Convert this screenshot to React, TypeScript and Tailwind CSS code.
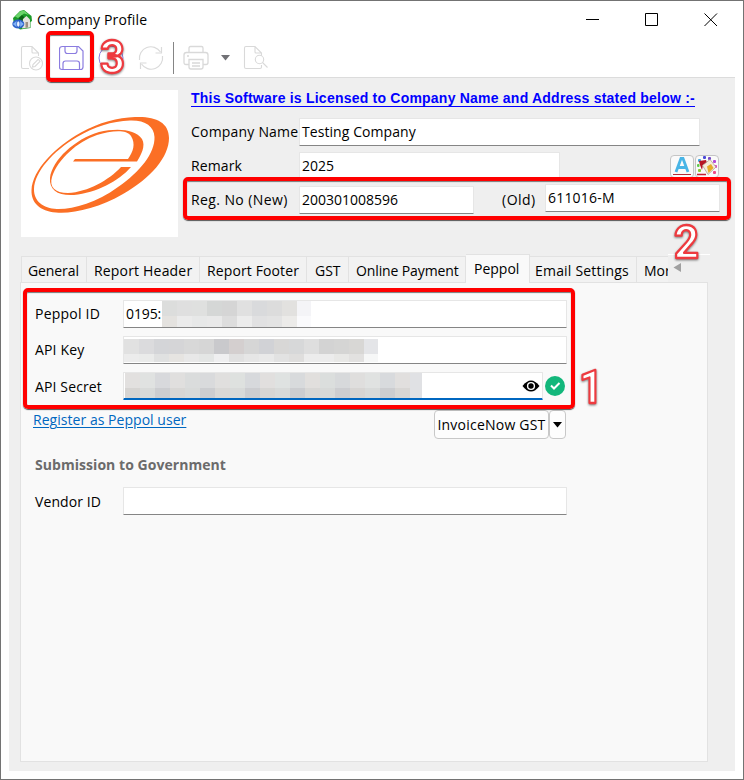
import React from "react";

const UI = "font-['Open_Sans','Noto_Sans',sans-serif]";

function AppIcon() {
  return (
    <svg width="20" height="20" viewBox="0 0 20 20">
      <path d="M1 8 L8 1 L12 0 L19.500 6 L20 11 L18.500 12 V18 L8 19.500 L2 14 Z" fill="#1c9a28" />
      <path d="M3 6.500 L8 1.500 L12 0.500 L17 5 L12 3.500 L6 8 Z" fill="#6bd46a" />
      <path d="M7 8 L10 5 L12 7 V11 H6 Z" fill="#0b6315" />
      <path d="M11 9 L14.500 6 L18 9.500 V17.500 L10 18.500 Z" fill="#e4e2dc" />
      <path d="M13.500 12 H16 V17.600 L13.500 18 Z" fill="#9a8f83" />
      <ellipse cx="6.300" cy="14" rx="6" ry="4.600" fill="#2c62c9" />
      <path d="M0.800 14 L4.500 11 V17 Z M11.800 14 L8.200 11 V17 Z" fill="#7fb0f5" />
      <ellipse cx="6.300" cy="14" rx="1.300" ry="2.800" fill="#e8f1ff" />
    </svg>
  );
}

function Logo() {
  return (
    <svg width="157" height="147" viewBox="0 0 157 147" fill="#fb6f25">
      <path
        fillRule="evenodd"
        d="M114 27 C134 26 148 32 148 48 C148 67 130 88 102 104 C78 118 52 124 35 122.500 C19 121 10 113 10.500 100 C11.500 80 34 57 60 42.500 C78 32.500 97 27.500 114 27 Z M109 30.500 C91 31 73 37 56 47 C32 61 13.500 82 13 99 C12.700 111 22 118.500 36 119 C52 119.500 75 113 97 97 C119 82 134 63 133.500 47 C133 36 124 30 109 30.500 Z"
      />
      <path
        fillRule="evenodd"
        d="M52 71.500 L54 69 H107 C112 62 115 54 110 46 C105 39 90 41 76 45 C56 52 37 69 31 87 C28 97 34 103 47 103 C67 102 88 90 100 77 H110 C98 91 75 103 53 105 C37 106 28 100 29 88 C31 70 54 49 78 42 C96 38 114 39 121 49 C125 56 120 65 116 71.500 Z"
      />
    </svg>
  );
}

function DocEdit() {
  return (
    <svg width="24" height="26" viewBox="0 0 24 26" fill="none" stroke="#d9d9d9" strokeWidth="1.1">
      <path d="M9 23.500 H3 Q1.500 23.500 1.500 22 V3 Q1.500 1.500 3 1.500 H12 L18.500 8 V11 M12 1.500 V7 Q12 8 13 8 H18.500" />
      <circle cx="16" cy="18.500" r="6.500" />
      <path d="M12.500 22 L13 19.500 L18 14.500 Q19 14.500 20 16.500 L15 21.500 Z" />
    </svg>
  );
}

function SaveIcon() {
  return (
    <svg width="25" height="26" viewBox="0.500 0 25 26" fill="none" stroke="#8b7ce0" strokeWidth="1.2">
      <path d="M4 1.500 H20 L24.500 6 V22 Q24.500 24.500 22 24.500 H3.500 Q1 24.500 1 22 V4 Q1 1.500 4 1.500 Z" />
      <path d="M6.500 1.500 V6 Q6.500 8.500 9 8.500 H16 Q18.500 8.500 18.500 6 V1.500" />
      <path d="M4.500 24.500 V18.500 Q4.500 16 7 16 H18.500 Q21 16 21 18.500 V24.500" />
    </svg>
  );
}

function RefreshIcon() {
  return (
    <svg width="26" height="26" viewBox="0 0 26 26" fill="none" stroke="#dadada" strokeWidth="1.2">
      <path d="M1.500 15 A11.500 11.500 0 0 1 22.500 7 M24.500 11 A11.500 11.500 0 0 1 3.500 19" />
      <path d="M23.500 2 V8 H17.500 M2.500 24 V18 H8.500" />
    </svg>
  );
}

function PrinterIcon() {
  return (
    <svg width="26" height="26" viewBox="0 0 26 26" fill="none" stroke="#d9d9d9" strokeWidth="1.3">
      <path d="M6 7.500 V3 Q6 1.500 7.500 1.500 H18.500 Q20 1.500 20 3 V7.500" />
      <path d="M6 19.500 H3 Q1 19.500 1 17.500 V10 Q1 7.500 3.500 7.500 H22.500 Q25 7.500 25 10 V17.500 Q25 19.500 23 19.500 H20" />
      <path d="M6 14.500 H20 V22 Q20 24 18 24 H8 Q6 24 6 22 Z M9 18 H17 M9 21 H17 M4 11 H6" />
    </svg>
  );
}

function DocSearch() {
  return (
    <svg width="26" height="26" viewBox="0 0 26 26" fill="none" stroke="#d9d9d9" strokeWidth="1.1">
      <path d="M18.500 20 V22 Q18.500 23.500 17 23.500 H3 Q1.500 23.500 1.500 22 V3 Q1.500 1.500 3 1.500 H12 L18.500 8 V11 M12 1.500 V7 Q12 8 13 8 H18.500" />
      <circle cx="16.500" cy="14.500" r="4.200" fill="#fff" />
      <path d="M19.500 17.500 L24.500 22.500" />
    </svg>
  );
}

function PaletteIcon() {
  return (
    <svg width="20" height="20" viewBox="0 0 20 20">
      <rect x="6" y="0" width="3" height="3" rx="1" fill="#4a4ad8" />
      <rect x="11" y="1" width="3" height="3" rx="1" fill="#7549c8" />
      <rect x="16" y="4" width="3" height="3" rx="1" fill="#b545d8" />
      <rect x="17" y="9" width="3" height="3" rx="1" fill="#e045c0" />
      <rect x="16" y="15" width="3" height="3" rx="1" fill="#ee4a85" />
      <rect x="1" y="3" width="3" height="3" rx="1" fill="#42a8df" />
      <rect x="0" y="8" width="2.500" height="3" rx="1" fill="#60c948" />
      <rect x="1" y="13" width="3" height="3" rx="1" fill="#8ac830" />
      <path d="M2 5 L9 4 L10 7 L6 9 L5 14 L3 9 Z" fill="#b61524" />
      <path d="M5.500 9.500 L13 3.500 L19 11 L11 18.500 Z" fill="#f5ecd9" stroke="#a69a8a" strokeWidth=".7" />
      <path d="M10 10.500 L14 8 L16.500 12 L11.500 17 Z" fill="#e6ac26" />
      <path d="M0 18.500 H9" stroke="#c41f32" strokeWidth="1.500" />
    </svg>
  );
}

function Field({ className, children }: { className: string; children?: React.ReactNode }) {
  return (
    <div
      className={`flex h-[28px] shrink-0 items-center border border-[#e6e6e6] border-b-[#858585] bg-white pl-[2px] rounded-[1px] ${className}`}
    >
      {children}
    </div>
  );
}

function Mosaic({ top, bottom, h1, h2, last }: { top: string[]; bottom: string[]; h1: string; h2: string; last: string }) {
  return (
    <div className="flex shrink-0 flex-col">
      {[top, bottom].map((row, r) => (
        <div key={r} className={`flex ${r === 0 ? h1 : h2}`}>
          {row.map((c, i) => (
            <div key={i} className={i === row.length - 1 ? last : "w-[15px]"} style={{ backgroundColor: c }} />
          ))}
        </div>
      ))}
    </div>
  );
}

function Tab({ label, className, text }: { label: string; className: string; text: string }) {
  return (
    <div className={`h-[26px] shrink-0 overflow-hidden border-r border-t border-[#e2e2e2] bg-[#f2f2f2] pt-[4px] whitespace-nowrap ${className}`}>
      <span className={text}>{label}</span>
    </div>
  );
}

function Frame({ className }: { className: string }) {
  return <div className={`absolute border-[4px] border-[#ff0000] rounded-[5px] shadow-[0_1px_1px_#555,inset_0_1px_1px_#777] ${className}`} />;
}

function Step({ n, className, width }: { n: string; className: string; width: number }) {
  return (
    <svg className={`absolute drop-shadow-[0_1px_1px_rgba(0,0,0,0.5)] ${className}`} width="40" height="64" viewBox="0 0 40 64">
      <text
        x="3"
        y="46"
        fontFamily="Roboto, sans-serif"
        fontWeight="700"
        fontSize="46"
        textLength={width}
        lengthAdjust="spacingAndGlyphs"
        fill="#fff"
        stroke="#ee3a3f"
        strokeWidth="2.300"
        strokeLinejoin="round"
      >
        {n}
      </text>
    </svg>
  );
}

const idTop = ["#dcdddc", "#dfdfdf", "#dfe0df", "#d5d7d6", "#d5d5d5", "#e0e0e0", "#d9dadc", "#dcdcdc", "#e2e1df", "#f4f4f7"];
const idBottom = ["#e4e2df", "#ebebeb", "#e7e8e8", "#e9e9e9", "#dddddd", "#ececec", "#e1e1e2", "#e3e3e3", "#ecebe9", "#fafafc"];
const keyTop = ["#e1e1e1", "#dbdbdd", "#d4d5d8", "#d5d5d7", "#d8d8d8", "#d6d6d6", "#c9c9cc", "#d4cfcf", "#d6d6d6", "#d1d2d6", "#d8d7d6", "#d7d8d9", "#dedede", "#d3d3d3", "#d5d5d4", "#d8d7d5", "#e4e5e8"];
const keyBottom = ["#ececec", "#eaebea", "#e0e1e1", "#e6e4e1", "#e8e8e8", "#e4e6e5", "#efeff0", "#e1e1e1", "#e6e6e6", "#e9e9e9", "#e2e2e2", "#dfdedd", "#ececec", "#ececec", "#e8e8e6", "#e2e1e0", "#f6f7f7"];
const secTop = ["#e2e0df", "#e0e2e1", "#d8d9dc", "#e0dfde", "#dadcdc", "#d9dadc", "#e0dfde", "#dee1df", "#d7d9dc", "#e1dfde", "#dfe2e1", "#d8dadc", "#e1dfdd", "#dbdedd", "#d7d9db", "#dfdedd", "#e0e2e1", "#d8dadd", "#e1dfde", "#e0e1e4"];
const secBottom = ["#d6d4d2", "#d8dad9", "#cccdd0", "#d8d7d5", "#d8dad9", "#cccdd0", "#d9d8d6", "#d8dad9", "#cccdd0", "#d7d6d4", "#d8dad9", "#cccdd0", "#d8d7d5", "#d7d9d8", "#cccdd0", "#d7d5d3", "#d8dad9", "#cccdd0", "#d8d6d4", "#e0e1e4"];

export default function App() {
  return (
    <div className={`relative flex h-[780px] w-[744px] flex-col overflow-hidden border border-[#737373] bg-white pr-[8px] pl-[8px] text-[14px] leading-[20px] text-black ${UI}`}>
      <header className="flex h-[38px] items-center pl-[3px]">
        <AppIcon />
        <span className="ml-[5px] tracking-[0.150px]">Company Profile</span>
        <svg className="mr-[16px] ml-auto" width="134" height="16" viewBox="0 0 134 16" fill="none" stroke="#000">
          <path d="M1 7.500 H14 M60.500 1.500 H72.500 V13.500 H60.500 Z" />
          <path d="M119.500 1.500 L132 14 M132 1.500 L119.500 14" />
        </svg>
      </header>
      <div className="flex h-[38px] shrink-0 items-center pl-[11px]">
        <DocEdit />
        <span className="ml-[15px]"><SaveIcon /></span>
        <svg className="ml-[14px]" width="26" height="26" viewBox="0 0 26 26" fill="none" stroke="#8b7ce0">
          <circle cx="13" cy="13" r="12" />
        </svg>
        <span className="ml-[14px]"><RefreshIcon /></span>
        <div className="ml-[9px] h-[32px] w-px bg-[#858585]" />
        <span className="ml-[9px]"><PrinterIcon /></span>
        <svg className="ml-[11px]" width="12" height="6" viewBox="0 0 12 6"><path d="M1 0 H10 L5.500 5.500 Z" fill="#717176" /></svg>
        <span className="ml-[11px]"><DocSearch /></span>
      </div>

      <main className="h-[694px] w-[726px] shrink-0 border-t border-[#dcdcdc] bg-[#efefef]">
        <section className="flex h-[176px] pt-[12px] pl-[12px]">
          <div className="h-[147px] w-[157px] shrink-0 bg-white"><Logo /></div>
          <div className="ml-[13px] w-[530px] shrink-0">
            <div className="h-[28px] pt-[1px] leading-[13px] whitespace-nowrap">
              <span className="border-b border-[#0000ff] font-['Liberation_Sans',sans-serif] text-[14px] font-bold tracking-[0.220px] text-[#0000ff]">This Software is Licensed to Company Name and Address stated below :-</span>
            </div>
            <div className="flex items-center">
              <span className="w-[108px] whitespace-nowrap tracking-[0.200px]">Company Name</span>
              <Field className="w-[401px]"><span className="tracking-[0.070px]">Testing Company</span></Field>
            </div>
            <div className="mt-[6px] flex items-center">
              <span className="w-[108px] tracking-[0.100px]">Remark</span>
              <Field className="w-[261px]">2025</Field>
              <div className="ml-[110px] flex gap-[1px]">
                <div className="flex h-[23px] w-[24px] items-center justify-center rounded-[4px] border border-[#c5c5c5] bg-[#fafafa]">
                  <svg width="20" height="20" viewBox="0 0 20 20">
                    <path d="M4 16 L9 2.500 H11 L16 16 M6 11.500 H14" fill="none" stroke="#49b5e6" strokeWidth="2.800" />
                    <path d="M1 18.500 H19" stroke="#b52b35" />
                  </svg>
                </div>
                <div className="flex h-[23px] w-[24px] items-center justify-center rounded-[4px] border border-[#c5c5c5] bg-[#fafafa]"><PaletteIcon /></div>
              </div>
            </div>
            <div className="mt-[6px] flex items-center">
              <span className="w-[108px] whitespace-nowrap tracking-[0.400px]">Reg. No (New)</span>
              <Field className="w-[175px]">200301008596</Field>
              <span className="ml-[28px] w-[43px] tracking-[0.500px]">(Old)</span>
              <Field className="mt-[-4px] w-[175px]"><span className="tracking-[0.200px]">611016-M</span></Field>
            </div>
          </div>
        </section>

        <div className="flex h-[28px] items-end pl-[12px]">
          <Tab label="General" className="w-[66px] border-l pl-[6px]" text="tracking-[-0.100px]" />
          <Tab label="Report Header" className="w-[113px] pl-[7px]" text="tracking-[0.180px]" />
          <Tab label="Report Footer" className="w-[107px] pl-[7px]" text="tracking-[0.120px]" />
          <Tab label="GST" className="w-[42px] pl-[8px]" text="" />
          <Tab label="Online Payment" className="w-[117px] pl-[7px]" text="tracking-[-0.120px]" />
          <div className="relative -mb-px h-[29px] w-[64px] border-t border-r border-[#e2e2e2] bg-[#f9f9f9] pt-[4px] pl-[8px]">Peppol</div>
          <Tab label="Email Settings" className="w-[107px] pl-[5px]" text="tracking-[0.200px]" />
          <Tab label="More" className="w-[31px] border-r-0 pl-[7px]" text="" />
          <div className="h-[28px] w-[42px] border-t border-white pt-[8px] pl-[5px]">
            <svg width="9" height="10" viewBox="0 0 9 10"><path d="M8 0 V9 L0.500 4.500 Z" fill="#a0a0a0" /></svg>
          </div>
        </div>

        <section className="ml-[11px] h-[480px] w-[688px] border border-[#e2e2e2] bg-[#f9f9f9] pt-[17px] pl-[14px]">
          <div className="flex items-center">
            <span className="w-[88px] tracking-[0.220px]">Peppol ID</span>
            <Field className="w-[444px]">
              <span className="w-[36px] shrink-0 tracking-[-0.100px]">0195:</span>
              <Mosaic top={idTop} bottom={idBottom} h1="h-[15px]" h2="h-[11px]" last="w-[14px]" />
            </Field>
          </div>
          <div className="mt-[8px] flex items-center">
            <span className="w-[88px] tracking-[0.150px]">API Key</span>
            <Field className="w-[444px] !pl-0">
              <Mosaic top={keyTop} bottom={keyBottom} h1="h-[15px]" h2="h-[8px]" last="w-[14px]" />
            </Field>
          </div>
          <div className="mt-[8px] flex items-center">
            <span className="w-[88px] pt-[2px] tracking-[0.130px]">API Secret</span>
            <Field className="w-[420px] border-b-2 !border-b-[#0067c0] !pl-[1px]">
              <Mosaic top={secTop} bottom={secBottom} h1="h-[15px]" h2="h-[10px]" last="w-[12px]" />
              <svg className="mr-[2px] ml-auto" width="18" height="14" viewBox="0 0 18 14">
                <path d="M0.500 7 Q9 -4 17.500 7 Q9 18 0.500 7 Z" fill="#000" />
                <circle cx="9" cy="7" r="4.100" fill="#fff" />
                <circle cx="9" cy="7" r="2.700" fill="#000" />
              </svg>
            </Field>
            <svg className="ml-[2px]" width="20" height="20" viewBox="0 0 20 20">
              <circle cx="10" cy="10" r="10" fill="#13b77b" />
              <path d="M6 9.500 L9 12.500 L14.500 7" fill="none" stroke="#fff" strokeWidth="2" />
            </svg>
          </div>
          <div className="mt-[10px] flex items-start">
            <span className="-ml-[2px] w-[401px] tracking-[0.040px] text-[#0067c0] underline underline-offset-2">Register as Peppol user</span>
            <div className="flex h-[29px] w-[115px] items-center justify-center rounded-[4px] border border-[#c8c8c8] bg-[#fdfdfd] whitespace-nowrap tracking-[0.220px]">InvoiceNow GST</div>
            <div className="flex h-[29px] w-[17px] items-center justify-center rounded-[4px] border border-[#c8c8c8] bg-[#fdfdfd]">
              <svg width="9" height="6" viewBox="0 0 9 6"><path d="M0 0 H9 L4.500 5.500 Z" /></svg>
            </div>
          </div>
          <h2 className="mt-[16px] font-bold tracking-[0.050px] text-[#6b6b6b]">Submission to Government</h2>
          <div className="mt-[12px] flex items-center">
            <span className="w-[88px] pt-[2px] tracking-[0.100px]">Vendor ID</span>
            <Field className="w-[444px]" />
          </div>
        </section>
      </main>

      <Frame className="top-[30px] left-[45px] h-[51px] w-[48px]" />
      <Frame className="top-[176px] left-[182px] h-[43px] w-[548px]" />
      <Frame className="top-[287px] left-[22px] h-[121px] w-[552px]" />
      <Step n="3" width={25} className="top-[26px] left-[96px]" />
      <Step n="2" width={25} className="top-[211px] left-[670px]" />
      <Step n="1" width={24} className="top-[356px] left-[575px]" />
    </div>
  );
}
